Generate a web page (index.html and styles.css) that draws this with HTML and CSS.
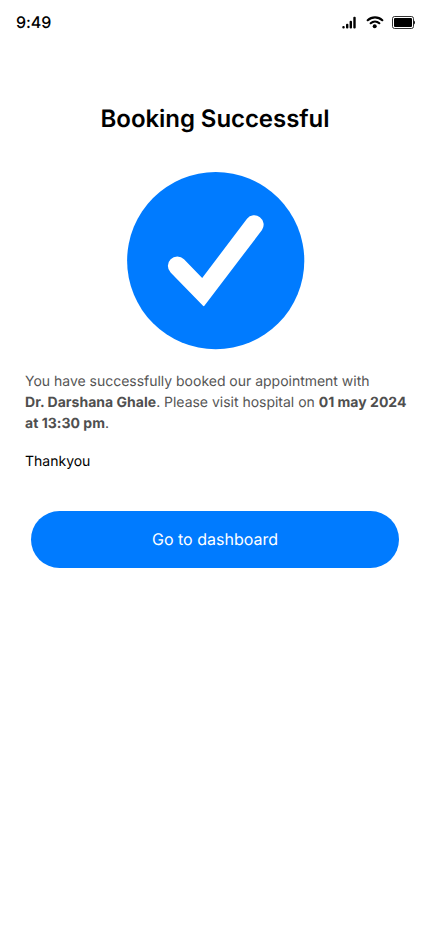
FILE: index.html
```html
<!DOCTYPE html>
<html lang="en">
<head>
<meta charset="utf-8">
<title>Booking Successful</title>
<link rel="stylesheet" href="styles.css">
</head>
<body>
<header class="status">
  <span class="time">9:49</span>
  <svg class="signal" width="14" height="13" viewBox="0 0 14 13"><rect x=".3" y="10" width="2.4" height="2.6" rx="1"/><rect x="4" y="7.8" width="2.4" height="4.8" rx="1"/><rect x="7.6" y="4.8" width="2.4" height="7.8" rx="1"/><rect x="11.3" y=".8" width="2.4" height="11.800" rx="1"/></svg>
  <svg class="wifi" width="18" height="14" viewBox="0 0 18 14"><path d="M1.700 5.200a10.600 10.600 0 0 1 14.600 0M4.700 8.200a6.400 6.400 0 0 1 8.600 0" fill="none" stroke="#000" stroke-width="2.200" stroke-linecap="round"/><circle cx="8.700" cy="11.200" r="2"/></svg>
  <svg class="battery" width="23" height="13" viewBox="0 0 23 13"><rect x=".5" y=".5" width="21" height="12" rx="2" fill="none" stroke="#000" stroke-opacity=".8"/><rect x="2" y="2" width="18" height="9" rx="1"/><path d="M21.700 4.500c1.600.3 1.600 3.700 0 4z"/></svg>
</header>
<main>
  <h1>Booking Successful</h1>
  <svg class="check" width="178" height="178" viewBox="0 0 178 178"><circle cx="88.700" cy="88.700" r="88.600" fill="#007bff"/><path d="M43.600 100.500A9.400 9.400 0 0 1 57 87.200L75.200 106L120 46.700A9.400 9.400 0 0 1 135 58L77.400 133.800Q76.700 134.500 76 133.800Z" fill="#fff"/></svg>
  <p class="message">You have successfully booked our appointment with<br><b>Dr. Darshana Ghale</b>. Please visit hospital on <b>01 may 2024<br>at 13:30 pm</b>.</p>
  <p class="thanks">Thankyou</p>
  <button class="dashboard">Go to dashboard</button>
</main>
</body>
</html>
```
FILE: styles.css
```css
* { box-sizing: border-box; }
body { margin: 0; min-height: 932px; background: #fff; color: #000; font-family: Inter, sans-serif; text-rendering: geometricPrecision; }
.status { height: 44px; padding: 0 15px 0 16px; display: flex; align-items: center; }
.time { font-size: 16px; font-weight: 500; letter-spacing: -.1px; margin-right: auto; }
.wifi { margin-left: 10px; }
.battery { margin-left: 8px; }
main { display: flex; flex-direction: column; padding: 60px 25px 0; }
h1 { margin: 0; font-size: 24px; line-height: 30px; font-weight: 600; letter-spacing: -.06px; text-align: center; }
.check { margin: 38px 0 0 102px; }
.message { margin: 21px 0 0; font-size: 14px; line-height: 21px; letter-spacing: -.015px; color: #555; white-space: nowrap; }
.message b { letter-spacing: .02px; color: #4f4f4f; }
.thanks { margin: 17px 0 0; font-size: 14px; line-height: 21px; }
.dashboard { margin: 39px 6px 0; width: 368px; height: 57px; padding: 0 0 2px; border: 0; border-radius: 29px; background: #007bff; color: #fff; font: 400 16px Inter, sans-serif; text-rendering: inherit; }
```
